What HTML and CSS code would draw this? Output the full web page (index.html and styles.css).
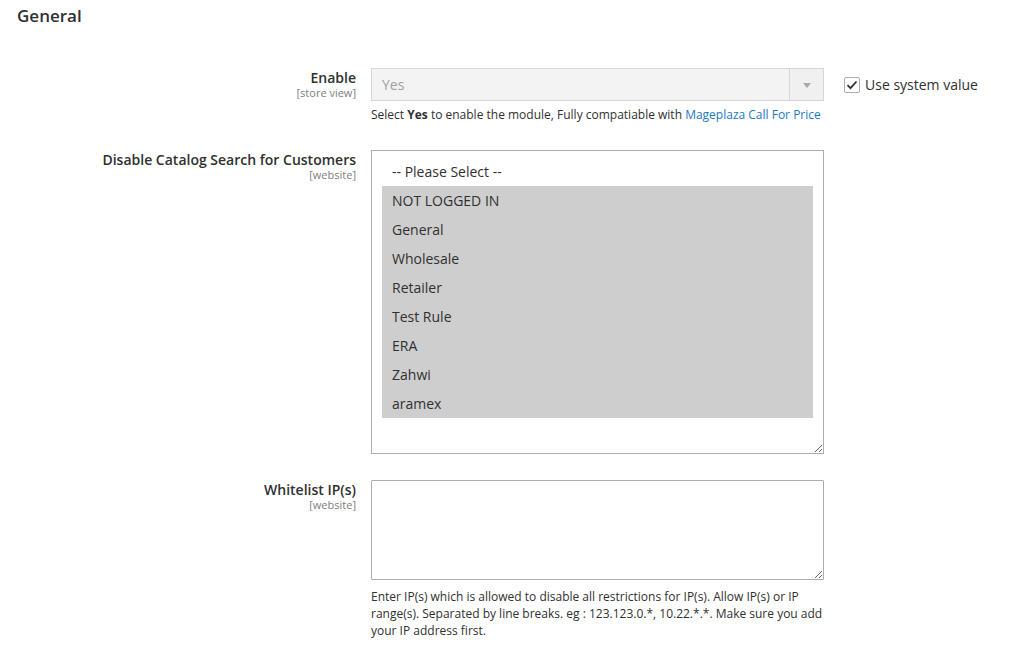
FILE: index.html
```html
<!DOCTYPE html>
<html>
<head>
<meta charset="utf-8">
<link rel="stylesheet" href="styles.css">
</head>
<body>
<div class="section">
  <h2 class="section-title">General</h2>
  <div class="fields">
    <div class="row row-enable">
      <div class="label">
        <span class="label-text">Enable</span>
        <span class="scope">[store view]</span>
      </div>
      <div class="control">
        <div class="select disabled">
          <span class="select-value">Yes</span>
          <span class="select-arrow"><span class="tri"></span></span>
        </div>
        <p class="note">Select <strong>Yes</strong> to enable the module, Fully compatiable with <a href="#">Mageplaza Call For Price</a></p>
      </div>
      <div class="extra">
        <label class="check">
          <span class="box">
            <svg width="12" height="10" viewBox="0 0 12 10"><path d="M1.5 5.2 L4.5 8.2 L10.5 1.5" fill="none" stroke="#303030" stroke-width="1.8"/></svg>
          </span>
          <span>Use system value</span>
        </label>
      </div>
    </div>

    <div class="row row-catalog">
      <div class="label">
        <span class="label-text">Disable Catalog Search for Customers</span>
        <span class="scope">[website]</span>
      </div>
      <div class="control">
        <div class="multiselect">
          <div class="opt">-- Please Select --</div>
          <div class="opt sel">NOT LOGGED IN</div>
          <div class="opt sel">General</div>
          <div class="opt sel">Wholesale</div>
          <div class="opt sel">Retailer</div>
          <div class="opt sel">Test Rule</div>
          <div class="opt sel">ERA</div>
          <div class="opt sel">Zahwi</div>
          <div class="opt sel">aramex</div>
        </div>
      </div>
      <div class="extra"></div>
    </div>

    <div class="row row-ip">
      <div class="label">
        <span class="label-text">Whitelist IP(s)</span>
        <span class="scope">[website]</span>
      </div>
      <div class="control">
        <textarea class="textarea"></textarea>
        <p class="note note-ip">Enter IP(s) which is allowed to disable all restrictions for IP(s). Allow IP(s) or IP range(s). Separated by line breaks. eg : 123.123.0.*, 10.22.*.*. Make sure you add your IP address first.</p>
      </div>
      <div class="extra"></div>
    </div>
  </div>
</div>
</body>
</html>
```

FILE: styles.css
```css
* { box-sizing: border-box; }
html, body {
  margin: 0;
  padding: 0;
  background: #ffffff;
  font-family: "Open Sans", "Liberation Sans", sans-serif;
  color: #303030;
}
.section-title {
  margin: 0;
  padding: 6px 0 0 17px;
  font-size: 17px;
  line-height: 20px;
  font-weight: 600;
  color: #303030;
}
.fields {
  padding-top: 42px;
}
.row {
  display: grid;
  grid-template-columns: 356px 453px 1fr;
  column-gap: 15px;
}
.row-enable { margin-bottom: 27px; }
.row-catalog { margin-bottom: 26px; }
.label {
  display: flex;
  flex-direction: column;
  align-items: flex-end;
  text-align: right;
  padding-top: 1px;
}
.label-text {
  font-size: 14px;
  line-height: 18px;
  font-weight: 600;
  color: #303030;
}
.scope {
  font-size: 11px;
  line-height: 11px;
  color: #808080;
  margin-top: 0;
}
.control { min-width: 0; }
.select {
  display: flex;
  height: 33px;
  border: 1px solid #d6d6d6;
  background: #f3f3f3;
}
.select-value {
  flex: 1;
  padding-left: 10px;
  font-size: 14px;
  line-height: 31px;
  color: #a0a0a0;
}
.select-arrow {
  width: 34px;
  border-left: 1px solid #d6d6d6;
  display: flex;
  align-items: center;
  justify-content: center;
  background: #f0f0f0;
}
.tri {
  width: 0;
  height: 0;
  border-left: 4px solid transparent;
  border-right: 4px solid transparent;
  border-top: 5px solid #a8a8a8;
  margin-top: 1px;
}
.note {
  margin: 5px 0 0;
  font-size: 12px;
  line-height: 17px;
  color: #303030;
}
.note strong { font-weight: 700; }
.note a { color: #1979c3; text-decoration: none; }
.note-ip { margin-top: 8px; }
.extra { padding-left: 5px; padding-top: 8px; }
.check {
  display: flex;
  align-items: center;
  gap: 5px;
  font-size: 14px;
  line-height: 18px;
  color: #303030;
}
.box {
  width: 16px;
  height: 16px;
  border: 1px solid #adadad;
  border-radius: 2px;
  display: flex;
  align-items: center;
  justify-content: center;
  background: #fff;
}
.multiselect {
  height: 304px;
  border: 1px solid #adadad;
  padding: 6px 10px 0;
  overflow: hidden;
  resize: vertical;
  background: #fff;
}
.opt {
  height: 29px;
  line-height: 29px;
  padding-left: 10px;
  font-size: 14px;
  color: #303030;
  white-space: nowrap;
}
.opt.sel { background: #cecece; }
.textarea {
  display: block;
  width: 453px;
  height: 100px;
  border: 1px solid #adadad;
  border-radius: 1px;
  margin: 0;
  padding: 8px 10px;
  font-family: inherit;
  font-size: 14px;
  background: #fff;
}
```
